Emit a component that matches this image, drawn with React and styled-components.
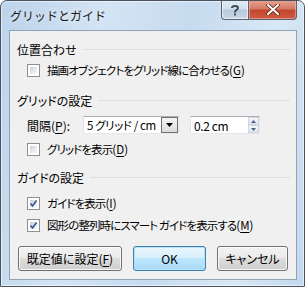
import React from "react";
import styled, { createGlobalStyle, css } from "styled-components";

const Global = createGlobalStyle`
  html, body { margin: 0; padding: 0; background: #ffffff; }
  body { font-family: "Noto Sans CJK JP", "Noto Sans", sans-serif; }
`;

const FONT = `"Noto Sans CJK JP", "Noto Sans", sans-serif`;

const Window = styled.div`
  width: 305px;
  height: 287px;
  box-sizing: border-box;
  border: 1px solid #4a5260;
  border-radius: 7px 7px 0 0;
  background: linear-gradient(100deg, #bcd3ea 0%, #d3e4f4 30%, #c7dbef 55%, #d9e8f5 80%, #c3d8ed 100%);
  box-shadow: inset 0 0 0 1px rgba(255, 255, 255, 0.55);
  display: flex;
  flex-direction: column;
  overflow: hidden;
  font-family: ${FONT};
  font-feature-settings: "palt";
`;

const TitleBar = styled.div`
  height: 29px;
  display: flex;
  align-items: flex-start;
  justify-content: space-between;
  padding-left: 9px;
`;

const Title = styled.div`
  margin-top: 6px;
  font-size: 12px;
  font-feature-settings: normal;
  color: #1a1a1a;
  text-shadow: 0 0 6px rgba(255, 255, 255, 0.9);
`;

const Caption = styled.div`
  display: flex;
  margin-right: 7px;
  margin-top: -1px;
`;

const CapBtn = styled.div`
  height: 20px;
  box-sizing: border-box;
  display: flex;
  align-items: center;
  justify-content: center;
  border: 1px solid #5a6270;
  border-top: none;
  ${(p) =>
    p.$close
      ? css`
          width: 48px;
          border-left: none;
          border-radius: 0 0 4px 0;
          background: linear-gradient(#e8a493 0%, #d67a64 45%, #c24830 55%, #cc5c3e 100%);
          box-shadow: inset 0 0 0 1px rgba(255, 200, 190, 0.5);
        `
      : css`
          width: 28px;
          border-radius: 0 0 0 4px;
          background: linear-gradient(#e4ecf5 0%, #d2dfec 45%, #b8c9dc 55%, #c9d8e8 100%);
          box-shadow: inset 0 0 0 1px rgba(255, 255, 255, 0.6);
        `}
`;

const Client = styled.div`
  margin: 0 7px 6px 8px;
  flex: 1;
  background: #f0f0f0;
  border: 1px solid #8fa3b8;
  display: flex;
  flex-direction: column;
  padding: 0 6px 0 7px;
`;

const GroupHeader = styled.div`
  height: 20px;
  margin-top: ${(p) => p.$mt}px;
  display: flex;
  align-items: center;
  gap: 6px;
  font-size: 12px;
  color: #000;
  &::after {
    content: "";
    flex: 1;
    height: 1px;
    background: #dadfe4;
    margin-top: 1px;
  }
`;

const Row = styled.div`
  height: ${(p) => p.$h || 20}px;
  margin-top: ${(p) => p.$mt || 0}px;
  display: flex;
  align-items: center;
  padding-left: ${(p) => p.$pl || 10}px;
  font-size: 12px;
  color: #000;
  white-space: nowrap;
`;

const Box = styled.span`
  width: 13px;
  height: 13px;
  box-sizing: border-box;
  border: 1px solid #8e8f8f;
  background: #fff;
  padding: 2px;
  margin-right: 7px;
  display: inline-flex;
  flex: none;
  position: relative;
  &::before {
    content: "";
    flex: 1;
    background: linear-gradient(135deg, #cbcfd5 0%, #e9ebee 60%, #f6f7f8 100%);
  }
`;

const Mark = styled.svg`
  position: absolute;
  left: 1px;
  top: 1px;
`;

const CheckText = styled.span`
  font-size: 11.5px;
  letter-spacing: -0.9px;
`;

const Paren = styled.span`
  letter-spacing: 0;
`;

const U = styled.span`
  text-decoration: underline;
  text-underline-offset: 2px;
`;

function Check({ checked, text, accel }) {
  return (
    <>
      <Box>
        {checked && (
          <Mark width="9" height="9" viewBox="0 0 9 9">
            <path d="M1.5 4.5 L3.5 6.8 L7.6 1.5" fill="none" stroke="#3b5a95" strokeWidth="1.7" />
          </Mark>
        )}
      </Box>
      <CheckText>
        {text}
        <Paren>
          (<U>{accel}</U>)
        </Paren>
      </CheckText>
    </>
  );
}

const Label = styled.span`
  width: 56px;
`;

const Combo = styled.div`
  width: 96px;
  height: 18px;
  box-sizing: border-box;
  border: 1px solid #abadb3;
  border-color: #abadb3 #e3e9ef #e3e9ef #e2e3ea;
  background: #fff;
  display: flex;
  align-items: center;
  padding-left: 3px;
  font-size: 11.5px;
  margin-right: 11px;
`;

const ComboText = styled.span`
  flex: 1;
  letter-spacing: -0.4px;
`;

const DropBtn = styled.div`
  width: 17px;
  height: 16px;
  box-sizing: border-box;
  border: 1px solid #707070;
  background: linear-gradient(#f4f4f4, #dcdcdc);
  display: flex;
  align-items: center;
  justify-content: center;
`;

const Spin = styled.div`
  width: 70px;
  height: 18px;
  box-sizing: border-box;
  border: 1px solid #abadb3;
  border-color: #abadb3 #e3e9ef #e3e9ef #e2e3ea;
  background: #fff;
  display: flex;
  align-items: center;
  padding-left: 3px;
  font-size: 12px;
`;

const SpinBtns = styled.div`
  width: 11px;
  height: 16px;
  display: flex;
  flex-direction: column;
`;

const SpinBtn = styled.div`
  flex: 1;
  box-sizing: border-box;
  border: 1px solid #cfd6de;
  background: linear-gradient(#f6f8fa, #dde3ea);
  display: flex;
  align-items: center;
  justify-content: center;
`;

const ButtonBar = styled.div`
  margin-top: 11px;
  display: flex;
  gap: 11px;
  padding-left: 1px;
`;

const Button = styled.div`
  width: ${(p) => p.$w}px;
  height: 25px;
  box-sizing: border-box;
  border: 1px solid ${(p) => (p.$default ? "#3c7fb1" : "#707070")};
  border-radius: 3px;
  background: ${(p) =>
    p.$default
      ? "linear-gradient(#eaf6fd 0%, #d9f0fc 45%, #bee6fd 50%, #a7d9f5 100%)"
      : "linear-gradient(#f2f2f2 0%, #ebebeb 45%, #dddddd 50%, #cfcfcf 100%)"};
  box-shadow: inset 0 0 0 1px ${(p) => (p.$default ? "#b8e0f6" : "rgba(255,255,255,0.8)")};
  display: flex;
  align-items: center;
  justify-content: center;
  font-size: 12px;
  color: #000;
`;

export default function App() {
  return (
    <>
      <Global />
      <Window>
        <TitleBar>
          <Title>グリッドとガイド</Title>
          <Caption>
            <CapBtn>
              <svg width="10" height="12" viewBox="0 0 10 12">
                <path
                  d="M2 4 C2 1.2 8 1.2 8 4 C8 6 5 6 5 8 L5 8.5"
                  fill="none"
                  stroke="#3d4a5a"
                  strokeWidth="2"
                />
                <rect x="4" y="9.5" width="2" height="2" fill="#3d4a5a" />
              </svg>
            </CapBtn>
            <CapBtn $close>
              <svg width="14" height="11" viewBox="0 0 14 11">
                <path d="M2 1 L12 10 M12 1 L2 10" stroke="#5a1a10" strokeWidth="3.4" strokeLinecap="round" />
                <path d="M2 1 L12 10 M12 1 L2 10" stroke="#ffffff" strokeWidth="2" strokeLinecap="round" />
              </svg>
            </CapBtn>
          </Caption>
        </TitleBar>
        <Client>
          <GroupHeader $mt={8}>位置合わせ</GroupHeader>
          <Row $mt={1} $pl={10}>
            <Check text="描画オブジェクトをグリッド線に合わせる" accel="G" />
          </Row>
          <GroupHeader $mt={10}>グリッドの設定</GroupHeader>
          <Row $h={28} $mt={1}>
            <Label>
              間隔(<U>P</U>):
            </Label>
            <Combo>
              <ComboText>5 グリッド / cm</ComboText>
              <DropBtn>
                <svg width="7" height="4" viewBox="0 0 7 4">
                  <path d="M0 0 H7 L3.5 4 Z" fill="#000" />
                </svg>
              </DropBtn>
            </Combo>
            <Spin>
              <ComboText>0.2 cm</ComboText>
              <SpinBtns>
                <SpinBtn>
                  <svg width="5" height="3" viewBox="0 0 5 3">
                    <path d="M0 3 H5 L2.5 0 Z" fill="#4d6185" />
                  </svg>
                </SpinBtn>
                <SpinBtn>
                  <svg width="5" height="3" viewBox="0 0 5 3">
                    <path d="M0 0 H5 L2.5 3 Z" fill="#4d6185" />
                  </svg>
                </SpinBtn>
              </SpinBtns>
            </Spin>
          </Row>
          <Row>
            <Check text="グリッドを表示" accel="D" />
          </Row>
          <GroupHeader $mt={8}>ガイドの設定</GroupHeader>
          <Row $mt={6}>
            <Check checked text="ガイドを表示" accel="I" />
          </Row>
          <Row $mt={2}>
            <Check checked text="図形の整列時にスマート ガイドを表示する" accel="M" />
          </Row>
          <ButtonBar>
            <Button $w={104}>
              既定値に設定(<U>F</U>)
            </Button>
            <Button $w={73} $default>
              OK
            </Button>
            <Button $w={71}>キャンセル</Button>
          </ButtonBar>
        </Client>
      </Window>
    </>
  );
}
